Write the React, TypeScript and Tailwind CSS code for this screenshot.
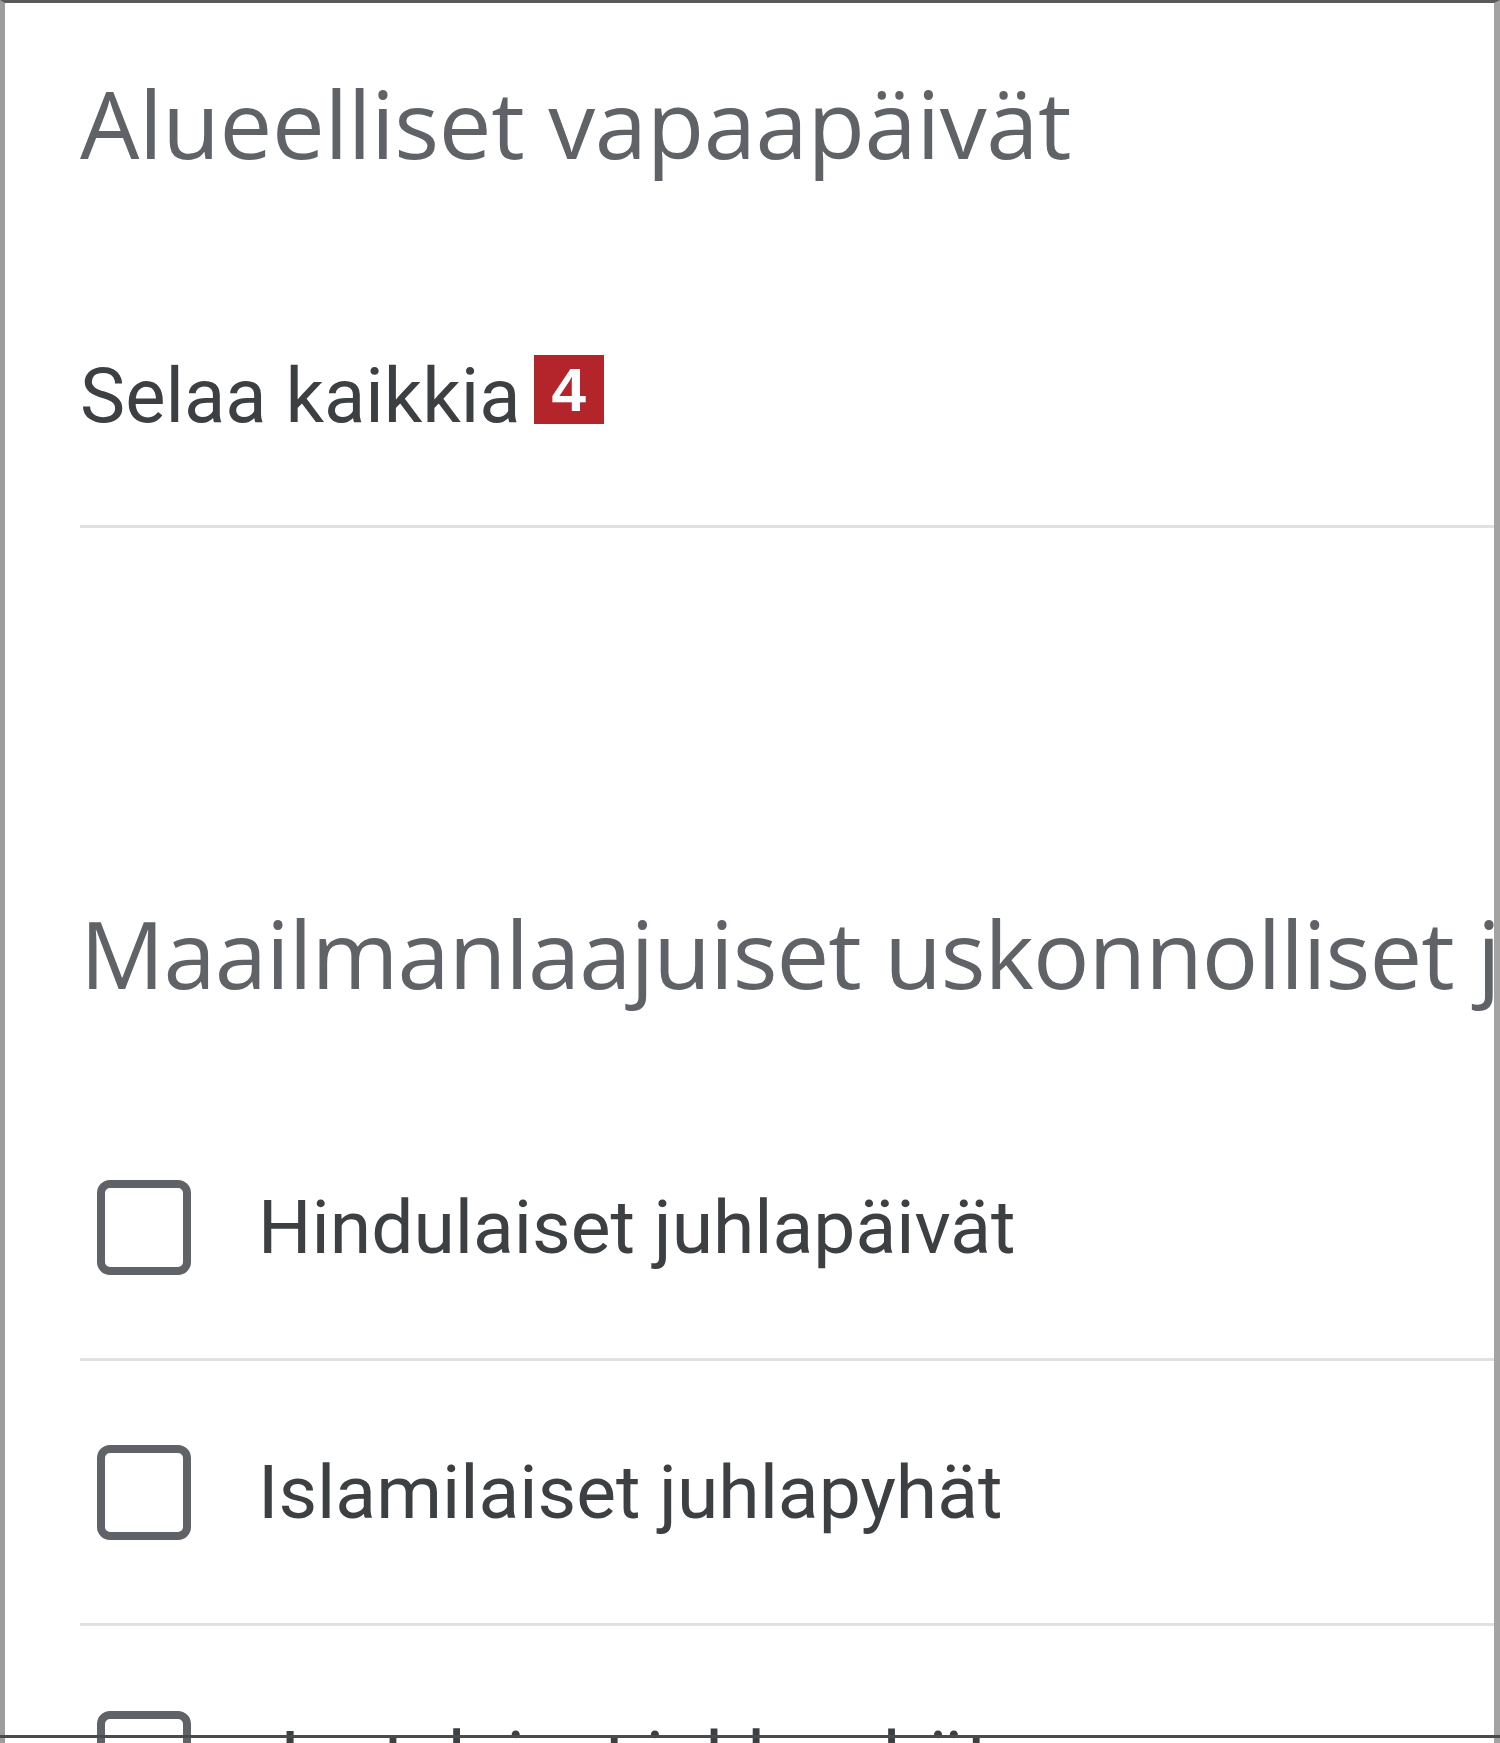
import React from "react";

function Checkbox() {
  return (
    <div className="h-[95px] w-[94px] shrink-0 rounded-[13px] border-[8px] border-[#5f6368] bg-white" />
  );
}

function Row({ label, last }: { label: string; last?: boolean }) {
  return (
    <div
      className={
        "flex h-[265px] items-center " +
        (last ? "" : "border-b-[3px] border-[#dfe1e3]")
      }
    >
      <div className="ml-[17px]">
        <Checkbox />
      </div>
      <span
        className="ml-[67px] whitespace-nowrap text-[75px] leading-none text-[#3c4043]"
        style={{ fontFamily: "Roboto, 'Noto Sans', sans-serif" }}
      >
        {label}
      </span>
    </div>
  );
}

export default function App() {
  const titleFont = { fontFamily: "'Open Sans', 'Noto Sans', sans-serif" };
  return (
    <div className="relative h-[1743px] w-[1500px] overflow-hidden bg-white">
      <div className="h-full border-t-[3px] border-l-[5px] border-r-[6px] border-t-[#5a5a5a] border-l-[#9d9d9d] border-r-[#a3a3a3] pl-[75px]">
        <h1
          className="mt-[73px] whitespace-nowrap text-[94px] font-normal leading-none tracking-[-0.4px] text-[#5f6368]"
          style={titleFont}
        >
          Alueelliset vapaapäivät
        </h1>
        <div className="mt-[188px] flex h-[170px] items-end border-b-[3px] border-[#dfe1e3] pb-[91px]">
          <span
            className="whitespace-nowrap text-[76px] leading-none text-[#3c4043]"
            style={{ fontFamily: "Roboto, 'Noto Sans', sans-serif" }}
          >
            Selaa kaikkia
          </span>
          <span
            className="mb-[10px] ml-[13px] flex h-[69px] w-[70px] items-center justify-center bg-[#b3252b] text-[62px] font-bold leading-none text-white"
            style={{ fontFamily: "'Liberation Sans', Arial, sans-serif" }}
          >
            4
          </span>
        </div>
        <h2
          className="mt-[378px] whitespace-nowrap text-[94px] font-normal leading-none tracking-[-1px] text-[#5f6368]"
          style={titleFont}
        >
          Maailmanlaajuiset uskonnolliset juhlapäivät
        </h2>
        <div className="mt-[96px]">
          <Row label="Hindulaiset juhlapäivät" />
          <Row label="Islamilaiset juhlapyhät" />
          <Row label="Juutalaiset juhlapyhät" last />
        </div>
      </div>
      <div className="absolute bottom-[5px] left-0 h-[3px] w-full bg-[#4a4a4a]" />
    </div>
  );
}
